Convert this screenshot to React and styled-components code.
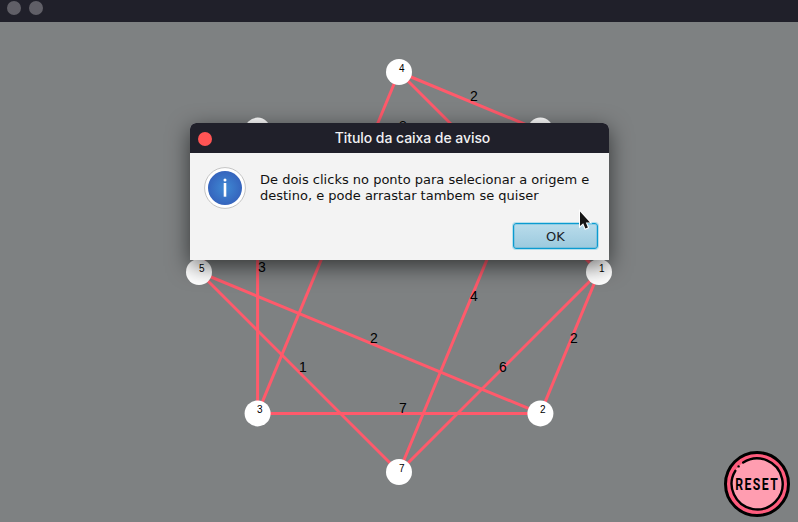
import React from "react";
import styled, { createGlobalStyle } from "styled-components";

const GlobalStyle = createGlobalStyle`
  * { box-sizing: border-box; }
  body { margin: 0; overflow: hidden; }
`;

const Window = styled.div`
  position: relative;
  display: flex;
  flex-direction: column;
  width: 798px;
  height: 522px;
  background: #7e8182;
  overflow: hidden;
`;

const WindowBar = styled.header`
  display: flex;
  gap: 8px;
  height: 22px;
  padding: 1px 7px;
  background: #20202a;
`;

const WindowDot = styled.span`
  width: 14px;
  height: 14px;
  border-radius: 50%;
  background: #605f67;
`;

const Board = styled.main`
  flex: 1;
  display: flex;
`;

const Graph = styled.svg`
  display: block;
  width: 798px;
  height: 500px;
  font-family: "Liberation Sans", Arial, sans-serif;
`;

const Edge = styled.line`
  stroke: #ff5a6b;
  stroke-width: 3px;
`;

const NodeDisc = styled.circle`
  fill: #fff;
`;

const NodeLabel = styled.text`
  font-size: 10px;
  fill: #000;
`;

const Weight = styled.text`
  font-size: 14px;
  fill: #000;
`;

const Dialog = styled.section`
  position: absolute;
  left: 190px;
  top: 123px;
  display: flex;
  flex-direction: column;
  width: 419px;
  height: 137px;
  border-radius: 6px 6px 0 0;
  background: #f3f3f3;
  box-shadow: 0 6px 22px rgba(0, 0, 0, 0.6);
`;

const DialogBar = styled.header`
  display: grid;
  grid-template-columns: 27px 1fr 9px;
  align-items: center;
  height: 30px;
  padding: 0 0 0 8px;
  border-radius: 6px 6px 0 0;
  background: #20202a;
`;

const CloseDot = styled.button`
  width: 14px;
  height: 14px;
  margin-top: 2px;
  padding: 0;
  border: 0;
  border-radius: 50%;
  background: #ff5454;
`;

const DialogTitle = styled.h1`
  margin: 0;
  color: #f1f1f3;
  font: 500 14px/20px Inter, sans-serif;
  letter-spacing: -0.06px;
  text-align: center;
  white-space: nowrap;
`;

const DialogBody = styled.div`
  display: flex;
  gap: 14px;
  padding: 14px 0 0 14px;
`;

const InfoIcon = styled.svg`
  flex: none;
  width: 42px;
  height: 42px;
`;

const Message = styled.p`
  margin: 5px 0 0;
  color: #111;
  font: 13px/16px "DejaVu Sans", sans-serif;
  white-space: pre;
`;

const DialogActions = styled.div`
  display: flex;
  justify-content: flex-end;
  padding: 14px 11px 0 0;
`;

const OkButton = styled.button`
  width: 85px;
  height: 26px;
  padding: 1px 0 0;
  border: 1px solid #0b9bd0;
  border-radius: 3px;
  background: linear-gradient(#b9dceb, #9ccade);
  box-shadow: 0 0 0 1px #b5dfec, inset 0 0 0 1px rgba(19, 155, 207, 0.25);
  color: #1b2328;
  font: 13px/24px "DejaVu Sans", sans-serif;
`;

const ResetButton = styled.button`
  position: absolute;
  left: 724px;
  top: 451px;
  width: 66px;
  height: 66px;
  padding: 0;
  border: 0;
  background: none;
`;

const ResetArt = styled.svg`
  display: block;
  width: 66px;
  height: 66px;
  overflow: visible;
  font: 700 17px "Roboto", sans-serif;
`;

const ResetLabel = styled.text`
  letter-spacing: 2px;
`;

const Pointer = styled.svg`
  position: absolute;
  left: 577px;
  top: 208px;
  width: 16px;
  height: 24px;
`;

const nodes = {
  4: [399, 50],
  8: [540.4, 108.6],
  1: [599, 250],
  2: [540.4, 391.4],
  7: [399, 450],
  3: [257.6, 391.4],
  5: [199, 250],
  6: [257.6, 108.6],
};

const edges = [
  [4, 8], [4, 1], [4, 3], [8, 7], [3, 6], [5, 6],
  [6, 8], [7, 1], [7, 5], [5, 2], [3, 2], [1, 2],
];

const weights = [
  ["2", 470, 79], ["8", 399, 109], ["3", 258, 250],
  ["2", 370, 321], ["1", 299, 350], ["7", 399, 391],
  ["4", 470, 279], ["6", 499, 350], ["2", 570, 321],
];

function GraphView() {
  return (
    <Graph viewBox="0 0 798 500">
      {edges.map(([a, b]) => (
        <Edge
          key={`${a}-${b}`}
          x1={nodes[a][0]}
          y1={nodes[a][1]}
          x2={nodes[b][0]}
          y2={nodes[b][1]}
        />
      ))}
      {weights.map(([label, x, y]) => (
        <Weight key={`${x}-${y}`} x={x} y={y}>{label}</Weight>
      ))}
      {Object.entries(nodes).map(([id, [x, y]]) => (
        <g key={id}>
          <NodeDisc cx={x} cy={y} r="13" />
          <NodeLabel x={Math.floor(x)} y={Math.round(y)}>{id}</NodeLabel>
        </g>
      ))}
    </Graph>
  );
}

export default function App() {
  return (
    <>
      <GlobalStyle />
      <Window>
        <WindowBar>
          <WindowDot />
          <WindowDot />
        </WindowBar>
        <Board>
          <GraphView />
        </Board>
        <ResetButton aria-label="Reset">
          <ResetArt viewBox="0 0 66 66">
            <circle cx="33" cy="33" r="31.5" fill="#ff5c7d" stroke="#000" strokeWidth="3" />
            <circle cx="33" cy="33" r="25.5" fill="#ff9db0" />
            <path
              d="M19.2 11.6A25.5 25.5 0 1 1 11.3 19.8"
              fill="none"
              stroke="#000"
              strokeWidth="2.4"
              strokeLinecap="round"
            />
            <circle cx="14.6" cy="15.4" r="1.2" />
            <ResetLabel transform="translate(11.2 39) scale(0.72 1)">RESET</ResetLabel>
          </ResetArt>
        </ResetButton>
        <Dialog role="dialog">
          <DialogBar>
            <CloseDot aria-label="Fechar" />
            <DialogTitle>Titulo da caixa de aviso</DialogTitle>
          </DialogBar>
          <DialogBody>
            <InfoIcon viewBox="0 0 42 42">
              <defs>
                <radialGradient id="infoBlue">
                  <stop offset="0" stopColor="#3f8ad4" />
                  <stop offset="1" stopColor="#3564bd" />
                </radialGradient>
              </defs>
              <circle cx="21" cy="21" r="20.4" fill="#fff" stroke="#c4c4c4" />
              <circle cx="21" cy="21" r="17" fill="url(#infoBlue)" />
              <circle cx="21" cy="12.9" r="1.5" fill="#fff" />
              <path d="M21 16V29.7" stroke="#fff" strokeWidth="2.6" />
            </InfoIcon>
            <Message>{"De dois clicks no ponto para selecionar a origem e\ndestino, e pode arrastar tambem se quiser"}</Message>
          </DialogBody>
          <DialogActions>
            <OkButton>OK</OkButton>
          </DialogActions>
        </Dialog>
        <Pointer viewBox="0 0 16 24">
          <path
            d="M3 3.6V18L6.2 15.3L8.4 20.6L10.9 19.5L8.8 14.5H13Z"
            fill="#151515"
            stroke="#fff"
            strokeWidth="2"
            paintOrder="stroke"
          />
        </Pointer>
      </Window>
    </>
  );
}
